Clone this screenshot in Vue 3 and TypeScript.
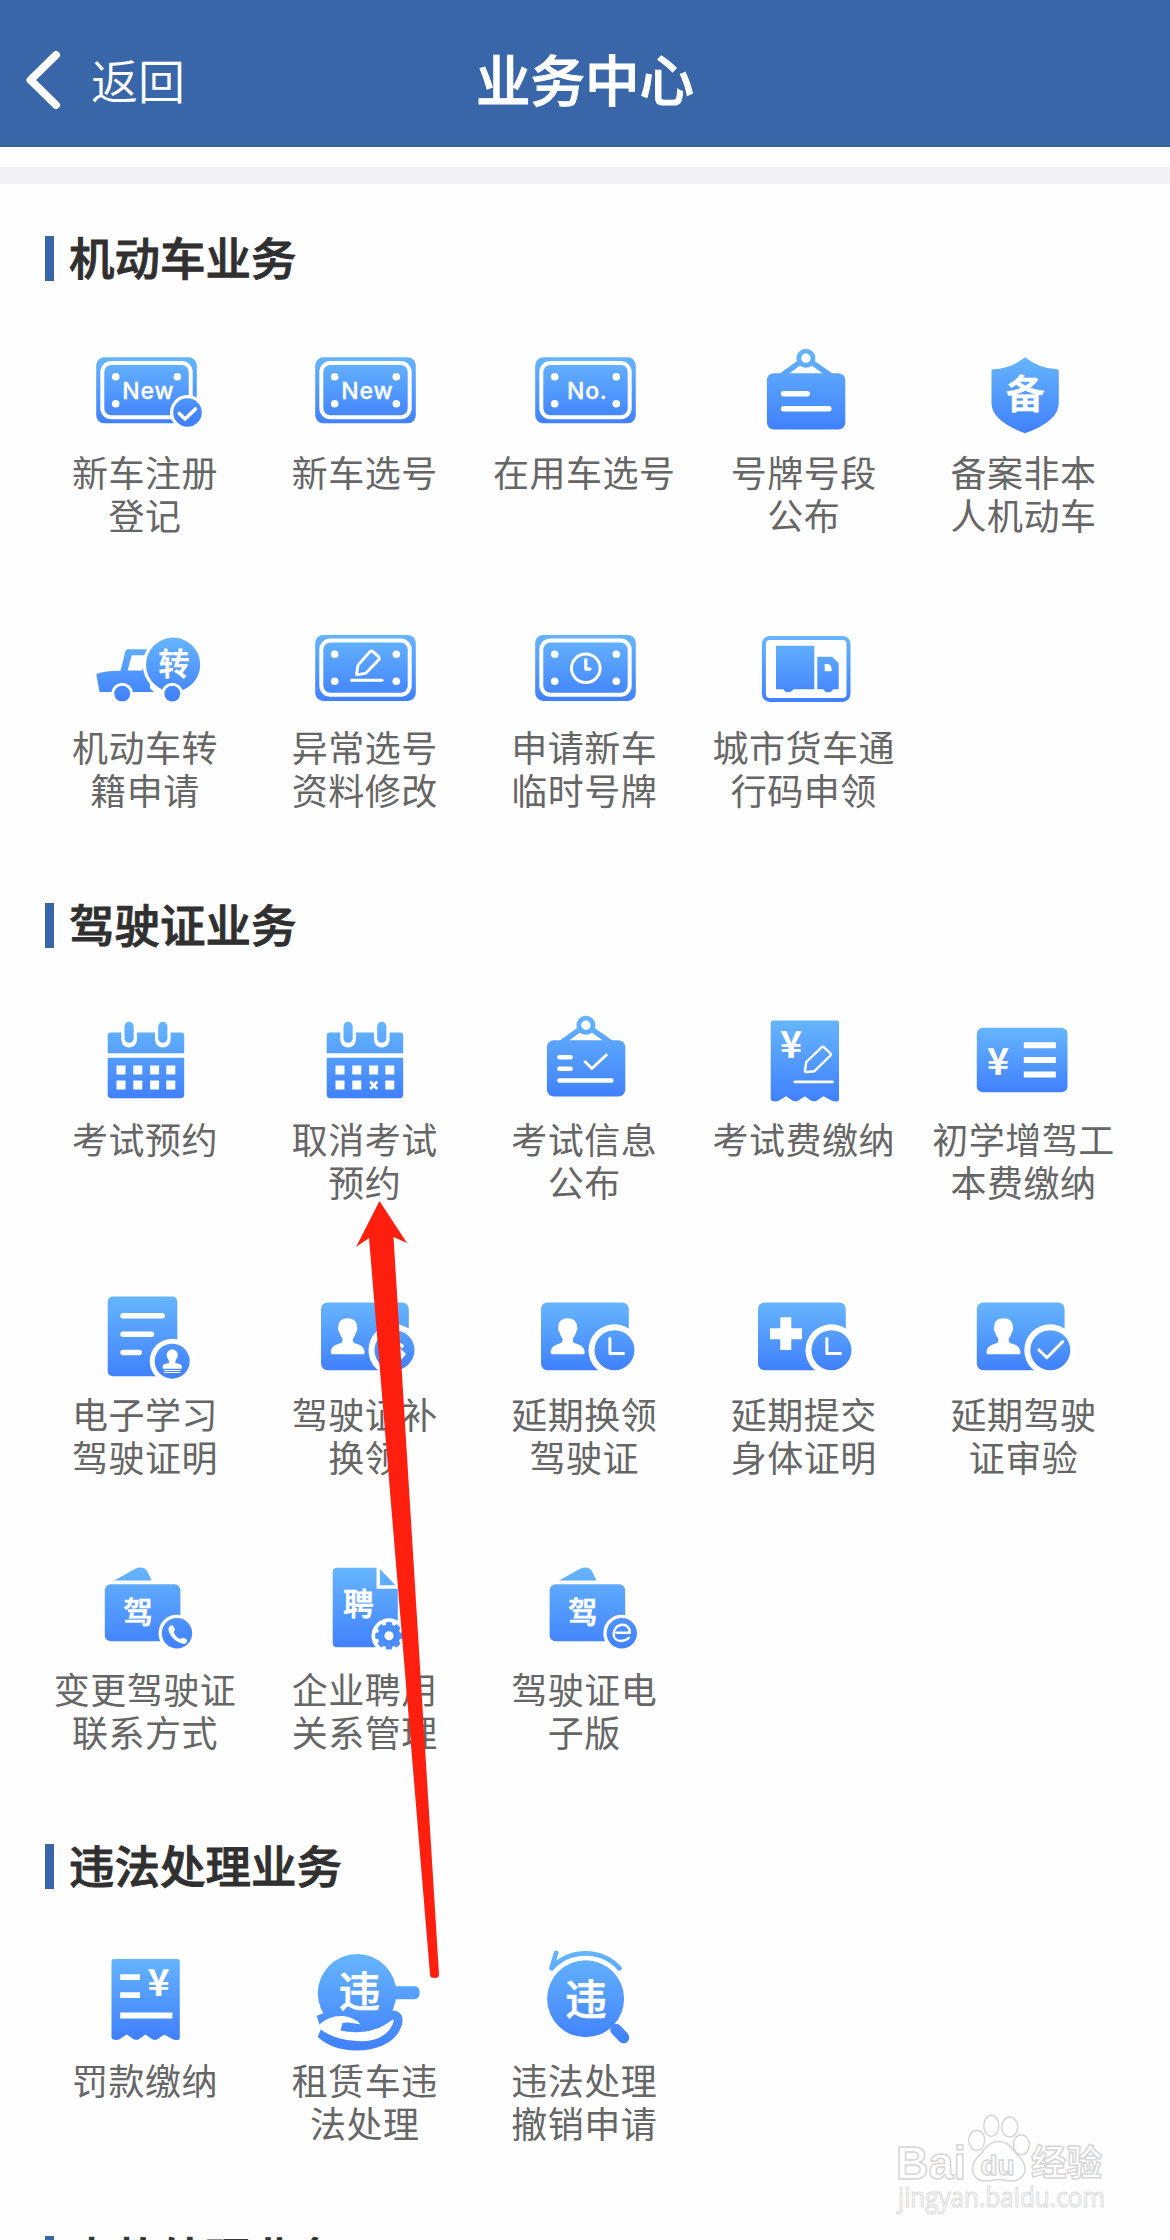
<script setup lang="ts">
interface Service {
  label: string
  icon: string
  top: number
  bottom: number
  char?: string
}

interface Section {
  title: string
  rows: Service[][]
}

const s = (label: string, icon: string, top: number, bottom: number, char?: string): Service => ({
  label,
  icon,
  top,
  bottom,
  char,
})

const sections: Section[] = [
  {
    title: '机动车业务',
    rows: [
      [
        s('新车注册\n登记', 'plate-check', 17, 84, 'New'),
        s('新车选号', 'plate', 17, 84, 'New'),
        s('在用车选号', 'plate', 17, 84, 'No.'),
        s('号牌号段\n公布', 'board', 9, 90),
        s('备案非本\n人机动车', 'shield', 17, 94),
      ],
      [
        s('机动车转\n籍申请', 'car', 22, 86),
        s('异常选号\n资料修改', 'plate-edit', 17, 84),
        s('申请新车\n临时号牌', 'plate-clock', 17, 84),
        s('城市货车通\n行码申领', 'truck', 21, 87),
      ],
    ],
  },
  {
    title: '驾驶证业务',
    rows: [
      [
        s('考试预约', 'calendar', 15, 92),
        s('取消考试\n预约', 'calendar-x', 15, 92),
        s('考试信息\n公布', 'board-check', 9, 90),
        s('考试费缴纳', 'receipt-edit', 13, 95),
        s('初学增驾工\n本费缴纳', 'fee-card', 21, 86),
      ],
      [
        s('电子学习\n驾驶证明', 'doc-stamp', 14, 97),
        s('驾驶证补\n换领', 'id-renew', 21, 89),
        s('延期换领\n驾驶证', 'id-clock', 21, 89),
        s('延期提交\n身体证明', 'medical', 21, 89),
        s('延期驾驶\n证审验', 'id-check', 21, 89),
      ],
      [
        s('变更驾驶证\n联系方式', 'wallet-phone', 11, 92),
        s('企业聘用\n关系管理', 'doc-gear', 11, 93),
        s('驾驶证电\n子版', 'wallet-e', 11, 92),
      ],
    ],
  },
  {
    title: '违法处理业务',
    rows: [
      [
        s('罚款缴纳', 'receipt', 11, 93),
        s('租赁车违\n法处理', 'hand', 6, 103),
        s('违法处理\n撤销申请', 'magnifier', 3, 96),
      ],
    ],
  },
  { title: '事故处理业务', rows: [] },
]

const cellX = [30.5, 47.3, 64.1, 80.3]
const teeth = 8
const gearAngles = Array.from({ length: teeth }, (_, i) => (i * 360) / teeth)
</script>

<template>
  <div class="page">
    <header class="navbar">
      <div class="back">
        <svg class="chevron" width="38" height="60" viewBox="0 0 38 60">
          <path d="M32 5 6.500 30 32 55" />
        </svg>
        <span>返回</span>
      </div>
      <h1>业务中心</h1>
    </header>
    <div class="divider"></div>

    <main>
      <section v-for="(sec, si) in sections" :key="sec.title">
        <h2><i></i><span>{{ sec.title }}</span></h2>
        <div v-for="(row, ri) in sec.rows" :key="ri" class="row">
          <div v-for="(it, ci) in row" :key="it.label" class="item">
            <svg width="120" height="110" viewBox="0 0 120 110" :fill="`url(#g${si}${ri}${ci})`">
              <defs>
                <linearGradient :id="`g${si}${ri}${ci}`" gradientUnits="userSpaceOnUse" x1="0" x2="0" :y1="it.top" :y2="it.bottom">
                  <stop offset="0" stop-color="#66b5fe" />
                  <stop offset="1" stop-color="#4080fd" />
                </linearGradient>
              </defs>

              <g v-if="it.icon.startsWith('plate')" :transform="ri ? 'translate(0 2.6)' : undefined">
                <rect x="10.200" y="17.300" width="100.600" height="66" rx="8" />
                <rect class="line" x="16.300" y="23" width="88.400" height="54.200" rx="9" stroke-width="4" />
                <g class="w">
                  <circle cx="29.700" cy="36.700" r="3.800" />
                  <circle cx="91.300" cy="36.700" r="3.800" />
                  <circle cx="29.700" cy="63.700" r="3.800" />
                  <circle v-if="it.icon !== 'plate-check'" cx="91.300" cy="63.700" r="3.800" />
                  <text v-if="it.char" class="latin" x="62.300" y="58.500">{{ it.char }}</text>
                </g>
                <template v-if="it.icon === 'plate-check'">
                  <circle class="w" cx="101.500" cy="72.500" r="17.500" />
                  <circle cx="101.500" cy="72.500" r="14.300" />
                  <path class="line" d="M93.300 73.500 99 79 109.500 69" stroke-width="3.600" />
                </template>
                <template v-if="it.icon === 'plate-edit'">
                  <path class="line" d="M51.500 57 53 47.500 64.500 34.500Q66.500 32.500 68.500 34.500L73.500 39Q74.800 40.500 73.500 42.500L61 55.500 53 57Z" stroke-width="2.900" />
                  <path class="line" d="M46.500 62.700H77" stroke-width="3" />
                </template>
                <template v-if="it.icon === 'plate-clock'">
                  <circle class="line" cx="60.800" cy="50.700" r="14.300" stroke-width="3" />
                  <path class="line" d="M60.800 42V51.500H65" stroke-width="3.200" />
                </template>
              </g>

              <g v-else-if="it.icon.startsWith('board')" transform="translate(-.4 0)">
                <circle class="ring" cx="61.300" cy="18.200" r="7.100" stroke-width="4.800" :stroke="`url(#g${si}${ri}${ci})`" />
                <path d="M34.500 34 54.500 19.500 57.500 24 44 34ZM88.500 34 68 19.500 65 24 79 34Z" />
                <rect x="22.300" y="33.200" width="78.400" height="56.300" rx="7" />
                <path v-if="it.icon === 'board'" class="line" d="M39 53.700H62.600M39 68.700H84.200" stroke-width="5.500" />
                <template v-else>
                  <path class="line" d="M34.800 50.200H46M34.800 61.800H46M34.800 73.500H86.800" stroke-width="4.600" />
                  <path class="line" d="M60.500 54.800 67.300 61.500 81.700 48" stroke-width="3" />
                </template>
              </g>

              <g v-else-if="it.icon === 'shield'">
                <path d="M61.100 17.300Q75 28.500 93 29.300Q94.800 29.400 94.800 31V63Q94.800 81 61.100 93.300Q27.500 81 27.500 63V31Q27.500 29.400 29.300 29.300Q47 28.500 61.100 17.300Z" />
                <text class="w han" x="61.300" y="68.300" font-size="38.500">备</text>
              </g>

              <g v-else-if="it.icon === 'car'">
                <path d="M10.200 59Q20 55.600 34.500 55.700L39.500 36Q40 34.300 42 34.300H64V77H13.600Z" />
                <path class="w" d="M45.800 40.300H62L56 55.500H41.600Z" />
                <circle class="w" cx="87.100" cy="49.700" r="30.300" />
                <path d="M55 58Q59 70 68 77H55Z" />
                <circle cx="87.100" cy="49.700" r="27.100" />
                <text class="w han" x="88" y="60" font-size="31">转</text>
                <circle class="w" cx="36.200" cy="78.700" r="10.800" />
                <circle class="w" cx="86.300" cy="78.700" r="10.800" />
                <circle cx="36.200" cy="78.700" r="7.900" />
                <circle cx="86.300" cy="78.700" r="7.900" />
              </g>

              <g v-else-if="it.icon === 'truck'" transform="translate(-.7 0)">
                <rect class="ring" x="19.600" y="22.900" width="84.600" height="62" rx="6" stroke-width="4" :stroke="`url(#g${si}${ri}${ci})`" />
                <path d="M31.700 30.700H70V74.200H49Q47.500 77.200 44 77.200T39 74.200H31.700ZM73 41.700H87.700L94.400 48.300V74.200H88.800Q87.500 77.200 84 77.200T79 74.200H73Z" />
                <path class="w" d="M80.400 49H84.500Q87.300 50.500 87.300 53.500V56.200H80.400Z" />
              </g>

              <g v-else-if="it.icon.startsWith('calendar')">
                <path d="M21.700 46.300V28.500Q21.700 25.500 24.700 25.500H95.200Q98.200 25.500 98.200 28.500V46.300ZM21.700 50.800H98.200V87.500Q98.200 91.300 94.500 91.300H25.500Q21.700 91.300 21.700 87.500Z" />
                <g class="w">
                  <rect x="35.300" y="12" width="15.600" height="28.500" rx="7.800" />
                  <rect x="69" y="12" width="15.600" height="28.500" rx="7.800" />
                  <template v-for="(x, i) in cellX" :key="x">
                    <rect :x="x" y="58.500" width="9" height="9" />
                    <rect v-if="!(it.icon === 'calendar-x' && i === 2)" :x="x" y="73.500" width="9" height="9" />
                  </template>
                </g>
                <rect x="38.500" y="14.800" width="9.200" height="21" rx="4.600" />
                <rect x="72.200" y="14.800" width="9.200" height="21" rx="4.600" />
                <path v-if="it.icon === 'calendar-x'" class="line butt" d="M65.200 74.500 72.200 82M72.200 74.500 65.200 82" stroke-width="2.600" />
              </g>

              <g v-else-if="it.icon.startsWith('receipt')" :transform="it.icon === 'receipt' ? 'translate(-.2 -2.600)' : undefined">
                <path d="M25.700 16Q25.700 13.500 28.200 13.500H91.500Q94 13.500 94 16V92.500Q94 94.500 91 94.500Q88 94.500 86.500 93.500L78.400 89.200 72 93.500Q69 95.200 66 93.500L59.700 89.200 53.500 93.500Q50.500 95.200 47.500 93.500L41 89.200 34 93.500Q31 95.200 27.500 94Q25.700 93.500 25.700 91.500Z" />
                <template v-if="it.icon === 'receipt-edit'">
                  <text class="w yen" x="46.100" y="50.700" font-size="37.500">¥</text>
                  <path class="line" d="M59.900 64 61.300 55 76.500 40.300Q77.700 39.300 79 40.300L85.500 46.500Q86.500 47.500 85.500 48.500L69.500 64.200 62 65Q60 65.200 59.900 64Z" stroke-width="2.400" />
                  <path class="line" d="M49.800 74.800H87.500" stroke-width="2.800" />
                </template>
                <template v-else>
                  <text class="w yen" x="72.800" y="50.500" font-size="37.500">¥</text>
                  <path class="line butt" d="M34.400 31.800H54.200M34.400 49.800H54.200M34.400 70.100H86.600" stroke-width="5.800" />
                </template>
              </g>

              <g v-else-if="it.icon === 'fee-card'">
                <rect x="12.800" y="20.800" width="90.700" height="64.400" rx="6" />
                <text class="w yen" x="34" y="68" font-size="37.500">¥</text>
                <path class="line butt" d="M59.800 38.300H91.800M59.800 52.900H91.800M59.800 67.500H91.800" stroke-width="6" />
              </g>

              <g v-else-if="it.icon === 'doc-stamp'">
                <rect x="21.700" y="14.500" width="69.600" height="79.700" rx="5" />
                <path class="line" d="M37 33.800H76.200M37 52.200H65.500M37 70.500H53.300" stroke-width="5.400" />
                <circle class="w" cx="86.200" cy="79.200" r="22.500" />
                <circle cx="86.200" cy="79.200" r="17.500" />
                <path class="w" transform="translate(-.5 0)" d="M86.700 67.500C90 67.500 92.300 70 92.300 73.200 92.300 76 90 77.500 89.700 80.500 90.500 82 96.300 81 96.300 84.500V86.800H77.100V84.500C77.100 81 83 82 83.700 80.500 83.500 77.500 81.200 76 81.200 73.200 81.200 70 83.500 67.500 86.700 67.500ZM78.300 88H95.100V89.100H78.300ZM78.300 90H95.100V91.100H78.300Z" />
              </g>

              <g v-else-if="it.icon.startsWith('id-') || it.icon === 'medical'" :transform="`translate(${it.icon === 'id-check' ? -3.6 : it.icon === 'medical' ? -3.4 : -0.4} 0)`">
                <rect x="16.400" y="20.400" width="87.800" height="67.800" rx="6.500" />
                <path v-if="it.icon === 'medical'" class="w" d="M38.700 35.200H49.700V46.200H60.400V57.200H49.700V67.900H38.700V57.200H28.400V46.200H38.700Z" />
                <path v-else class="w" d="M43.100 36.300C49.500 36.300 52.500 40 52.300 44.500 53.500 46 52.300 49 51.300 50.500 50.500 54 48.800 55.500 48.300 57 48 60 49 60.800 52 61.800 57.500 63.500 59.800 66 60.100 70.500Q60.200 72.200 58.500 72.200H27.700Q26 72.200 26.100 70.500C26.400 66 28.700 63.500 34.200 61.800 37.200 60.800 38.200 60 37.900 57 37.400 55.500 35.700 54 34.900 50.500 33.900 49 32.700 46 33.900 44.500 33.700 40 36.700 36.300 43.100 36.300Z" />
                <circle class="w" cx="89.900" cy="68.200" r="26" />
                <circle cx="89.900" cy="68.200" r="20" />
                <path v-if="it.icon === 'id-clock' || it.icon === 'medical'" class="line" d="M85.300 56.500V71.500H99" stroke-width="3" />
                <path v-if="it.icon === 'id-check'" class="line" d="M78.400 67.800 86.500 75.800 102.300 59.600" stroke-width="3" />
                <template v-if="it.icon === 'id-renew'">
                  <path class="line" d="M82 63Q90 58.500 97.500 64" stroke-width="3.600" />
                  <path class="w" d="M90 61 101.500 72 91.500 83.500Z" />
                </template>
              </g>

              <g v-else-if="it.icon.startsWith('wallet')" :transform="it.icon === 'wallet-e' ? 'translate(5.4 0)' : 'translate(-.4 0)'">
                <path d="M28.800 23.500 49.500 11.800Q58.500 8.300 62 15L66 23.500Z" />
                <rect x="19.200" y="27.200" width="75.600" height="57" rx="6" />
                <text class="w han" x="52.400" y="66.300" font-size="29.500">驾</text>
                <circle class="w" cx="91.400" cy="76.200" r="18.500" />
                <circle cx="91.400" cy="76.200" r="15.200" />
                <path v-if="it.icon === 'wallet-phone'" class="w" d="M85.500 68.300C87 67.400 89.300 70.800 89.300 72.500 89.300 74 87.800 74 88.300 75.500 89 78 91.500 80.600 94 81.800 95.500 82.300 96 80.500 97.500 80.700 99.300 81 102 82.800 101.600 84.200 101 86.500 98.800 87.200 96.500 86.500 90 84.600 84.500 79.500 83 73.500 82.500 71 83.500 69.200 85.500 68.300Z" />
                <path v-else class="line" d="M86 75.800H99.500Q98.800 67.800 92 67.800C86 67.800 83.200 73 83.200 77 83.200 81 86 84 90.500 84Q95.500 84 98.500 80.800" stroke-width="2.400" />
              </g>

              <g v-else-if="it.icon === 'doc-gear'">
                <path d="M32.500 10.800H71.500V31.800H92.800V86Q92.800 90.200 88.500 90.200H32Q27.700 90.200 27.700 86V15Q27.700 10.800 32.500 10.800Z" />
                <path d="M75 12 90.500 28.300H75Z" />
                <text class="w han" x="53.400" y="58" font-size="30.500">聘</text>
                <circle class="w" cx="84" cy="78.800" r="17.500" />
                <circle cx="84" cy="78.800" r="11.300" />
                <rect v-for="a in gearAngles" :key="a" x="80.800" y="65" width="6.400" height="8" rx="1.500" :transform="`rotate(${a} 84 78.800)`" />
                <circle class="w" cx="84" cy="78.800" r="4.600" />
              </g>

              <g v-else-if="it.icon === 'hand'">
                <circle cx="52.100" cy="45.200" r="39.300" />
                <rect x="86" y="38.200" width="28.500" height="13" rx="5" />
                <path d="M11.500 67.800 26 62.500H84Q90 61.500 94 64.500 99 68 97 76C93 93 74 102.500 52 102.500 35 102.500 22 97.500 12.700 89L16 81Z" />
                <path class="w" d="M14.500 76.500C24 68 36 66 46 70 51 72 54.500 74 55 76.300 49 75.500 43 73.500 37.500 75L35.500 82.500C52 86 71 85 87.500 71.500L88.800 72.500C86 85 73 93.500 57 93.200 42 93 27 90 16 81.500Z" />
                <text class="w han" x="54.400" y="58.700" font-size="41.500">违</text>
              </g>

              <g v-else-if="it.icon === 'magnifier'">
                <path class="ring" d="M91 81.500 98.500 89.500" stroke-width="11.500" :stroke="`url(#g${si}${ri}${ci})`" />
                <circle cx="60.600" cy="50.800" r="38.500" />
                <path class="ring" d="M94.500 20.300A46 46 0 0 0 26.500 20.300L31.200 5" stroke-width="4.800" :stroke="`url(#g${si}${ri}${ci})`" />
                <text class="w han" x="61" y="66.700" font-size="41.500">违</text>
              </g>
            </svg>
            <p>{{ it.label }}</p>
          </div>
        </div>
      </section>
    </main>

    <svg class="pointer" width="100" height="790" viewBox="0 0 100 790">
      <path d="M29.500 1 57 43 43.500 37 89 774.500Q89 778 84.500 778T80 774.500L19 38 6 47Z" />
    </svg>

    <svg class="watermark" width="230" height="135" viewBox="0 0 230 135">
      <g class="mark">
        <text x="6" y="79" font-size="46" textLength="70" lengthAdjust="spacingAndGlyphs" class="bold">Bai</text>
        <ellipse cx="86.700" cy="40.300" rx="8" ry="10" />
        <ellipse cx="101.300" cy="25.700" rx="7.500" ry="10.500" />
        <ellipse cx="119.700" cy="27" rx="8" ry="10" />
        <ellipse cx="131.300" cy="44.700" rx="8" ry="10" />
        <path d="M109 41.500C118 41.500 121 48 126 53.500 131 58.500 135 62 135 69 135 77 128 81.500 120 81 115 80.500 112 79.500 108.500 79.500 105 79.500 102 80.500 97 81 88 81.500 82.500 76 82.500 69 82.500 62 87 58 91 53.500 96 47 100 41.500 109 41.500Z" />
        <text x="90.500" y="74.500" font-size="28" textLength="34" lengthAdjust="spacingAndGlyphs" class="bold">du</text>
        <text x="141" y="76" font-size="36" textLength="71" lengthAdjust="spacingAndGlyphs" class="cjk">经验</text>
        <text x="8" y="107" font-size="27.500" textLength="207" lengthAdjust="spacingAndGlyphs" class="url">jingyan.baidu.com</text>
      </g>
    </svg>
  </div>
</template>

<style>
body {
  background: #fefefe;
}
</style>

<style scoped>
.page {
  position: relative;
  width: 1170px;
  height: 2240px;
  overflow: hidden;
  background: #fefefe;
  font-family: 'Noto Sans CJK SC', sans-serif;
}
.navbar {
  box-sizing: border-box;
  display: grid;
  grid-template-columns: 1fr auto 1fr;
  height: 147px;
  padding: 0 24px;
  background: #3866a8;
  border-bottom: 2px solid #3c6090;
  color: #fff;
}
.back {
  display: flex;
  align-items: flex-start;
  gap: 29px;
  font-size: 47px;
  font-weight: 350;
  line-height: 60px;
  padding-top: 49px;
}
.chevron {
  margin-top: 1px;
}
.chevron path {
  fill: none;
  stroke: #fff;
  stroke-width: 8;
  stroke-linecap: round;
  stroke-linejoin: round;
}
.navbar h1 {
  margin: 0;
  padding-top: 48px;
  font-size: 54.500px;
  line-height: 60px;
  font-weight: 500;
  -webkit-text-stroke: 1px #fff;
}
.divider {
  height: 17px;
  margin-top: 20px;
  background: #f1f1f6;
}
main {
  padding: 52px 36px 0;
}
section {
  margin-bottom: 89.500px;
}
h2 {
  display: flex;
  gap: 15px;
  height: 45px;
  margin: 0 0 59px;
  padding-left: 9px;
  font-size: 45.500px;
  line-height: 40px;
  font-weight: 500;
  color: #303030;
  -webkit-text-stroke: 0.9px #303030;
}
h2 i {
  width: 9px;
  height: 45px;
  background: #3866a8;
}
.row {
  display: grid;
  grid-template-columns: repeat(5, 1fr);
  height: 198px;
}
.row + .row {
  margin-top: 77px;
}
.item {
  display: flex;
  flex-direction: column;
  align-items: center;
}
.item p {
  margin: 0 1.500px 0 0;
  font-size: 36px;
  line-height: 43px;
  letter-spacing: 0.5px;
  text-align: center;
  white-space: pre;
  color: #666;
}
.w {
  fill: #fff;
}
.line {
  fill: none;
  stroke: #fff;
  stroke-linecap: round;
  stroke-linejoin: round;
}
.butt {
  stroke-linecap: butt;
}
.ring {
  fill: none;
  stroke-linecap: round;
  stroke-linejoin: round;
}
.han {
  font-weight: 500;
  text-anchor: middle;
  stroke: #fff;
  stroke-width: 0.7;
}
.yen {
  font-weight: 700;
  text-anchor: middle;
}
.latin {
  font: 500 23px Inter, sans-serif;
  letter-spacing: 0.8px;
  text-anchor: middle;
  stroke: #fff;
  stroke-width: 0.3;
}
.pointer {
  position: absolute;
  left: 350px;
  top: 1200px;
  fill: #ff1f0f;
}
.watermark {
  position: absolute;
  left: 890px;
  top: 2100px;
}
.mark {
  fill: #fff;
  stroke: #d6d6d6;
  stroke-width: 1.5;
}
.bold {
  font-family: 'Liberation Sans', sans-serif;
  font-weight: 700;
}
.cjk {
  font-weight: 700;
}
.url {
  font-family: 'Open Sans', sans-serif;
  stroke: #dedede;
  stroke-width: 1.2;
}
</style>
